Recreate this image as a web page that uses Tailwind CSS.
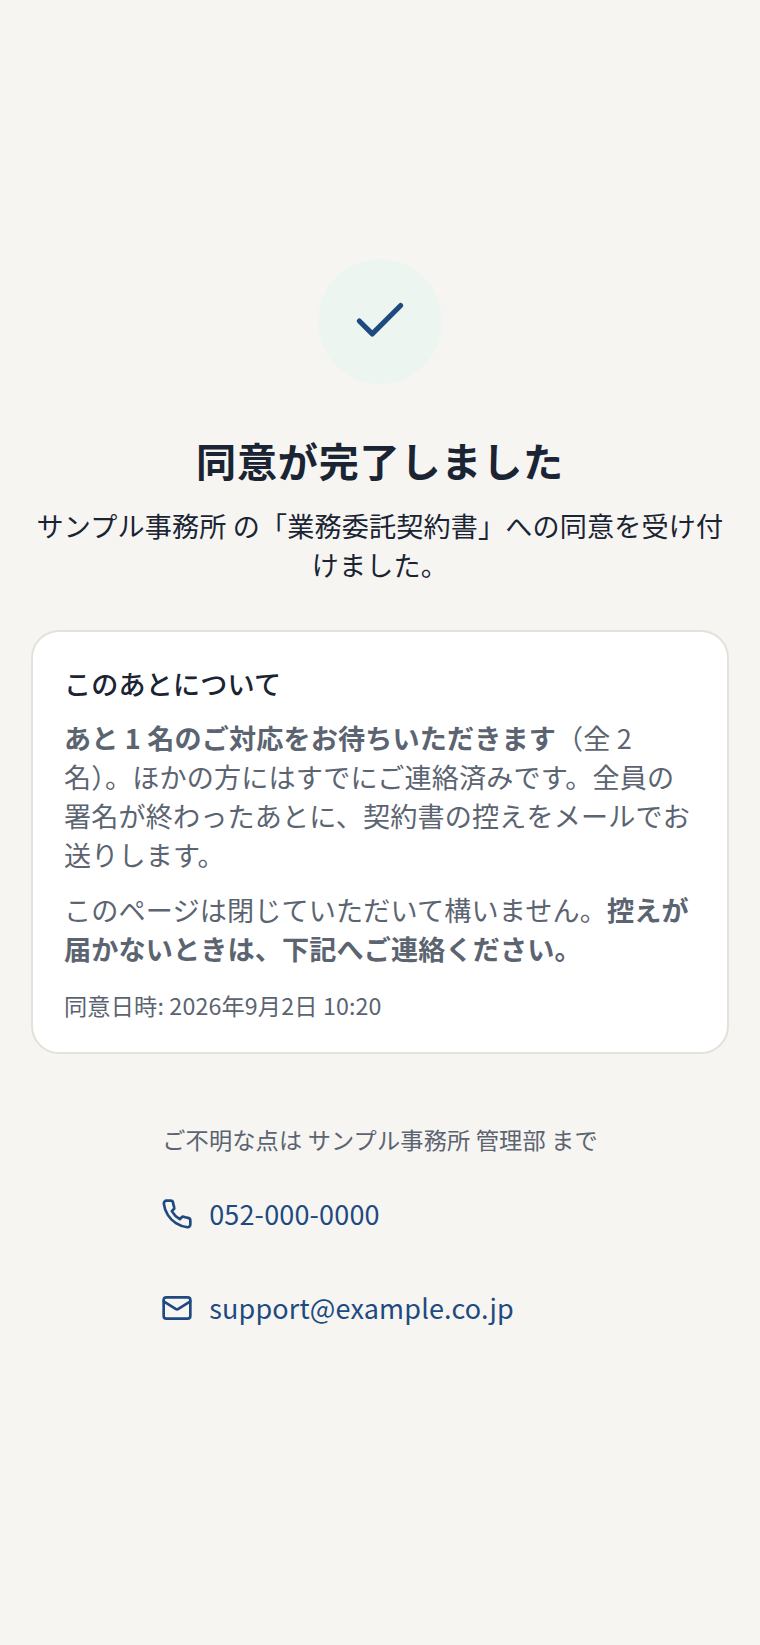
<!DOCTYPE html>
<html lang="ja"><head><meta charset="utf-8">
<script src="https://cdn.jsdelivr.net/npm/@tailwindcss/browser@4"></script>
</head>
<body class="bg-[#f6f5f2] font-['Noto_Sans_CJK_JP','Noto_Sans',sans-serif]">
<main class="h-[1645px] flex flex-col items-center pt-[259px] px-[31px] text-[#1a2433] tracking-[0.01em]">
<div class="w-[124.8px] h-[124.8px] rounded-full bg-[#edf5f1] flex items-center justify-center">
<svg class="w-[62px] h-[62px] text-[#1e4a80]" viewBox="0 0 24 24" fill="none" stroke="currentColor" stroke-width="2" stroke-linecap="round" stroke-linejoin="round"><path d="M20 6 9 17l-5-5"/></svg>
</div>
<h1 class="mt-[48.2px] text-[40.1px] leading-[56px] font-bold text-center tracking-[0.02em]">同意が完了しました</h1>
<p class="mt-[18px] text-[27.1px] leading-[39px] text-center">サンプル事務所 の「業務委託契約書」への同意を受け付けました。</p>
<section class="mt-[46px] w-full bg-white border-2 border-[#e4e1da] rounded-[28px] px-[31px] pt-[32px] pb-[29px]">
<h2 class="text-[27.1px] leading-[39px] font-medium">このあとについて</h2>
<p class="mt-[15px] text-[27.1px] leading-[39.15px] text-[#5b6470]"><strong class="font-bold">あと 1 名のご対応をお待ちいただきます</strong>（全 2 名）。ほかの方にはすでにご連絡済みです。全員の署名が終わったあとに、契約書の控えをメールでお送りします。</p>
<p class="mt-[15px] text-[27.1px] leading-[39.15px] text-[#5b6470]">このページは閉じていただいて構いません。<strong class="font-bold">控えが届かないときは、下記へご連絡ください。</strong></p>
<p class="mt-[19px] text-[23.2px] leading-[36px] text-[#5b6470]">同意日時: 2026年9月2日 10:20</p>
</section>
<div class="mt-[67px] flex flex-col">
<p class="text-[23.2px] leading-[36px] text-[#5b6470]">ご不明な点は サンプル事務所 管理部 まで</p>
<a class="mt-[24px] flex items-center gap-[16px] h-[66px] text-[27px] text-[#1e4a80]"><svg class="w-[32px] h-[32px] -ml-[1px]" viewBox="0 0 24 24" fill="none" stroke="currentColor" stroke-width="2" stroke-linecap="round" stroke-linejoin="round"><path d="M22 16.92v3a2 2 0 0 1-2.18 2 19.79 19.79 0 0 1-8.63-3.07 19.5 19.5 0 0 1-6-6 19.79 19.79 0 0 1-3.07-8.67A2 2 0 0 1 4.11 2h3a2 2 0 0 1 2 1.72c.127.96.361 1.903.7 2.81a2 2 0 0 1-.45 2.11L8.09 9.91a16 16 0 0 0 6 6l1.27-1.27a2 2 0 0 1 2.11-.45c.907.339 1.85.573 2.81.7A2 2 0 0 1 22 16.92z"/></svg>052-000-0000</a>
<a class="mt-[28px] flex items-center gap-[16px] h-[66px] text-[27px] text-[#1e4a80]"><svg class="w-[32px] h-[32px] -ml-[1px]" viewBox="0 0 24 24" fill="none" stroke="currentColor" stroke-width="2" stroke-linecap="round" stroke-linejoin="round"><rect x="2" y="4" width="20" height="16" rx="2"/><path d="m22 7-8.97 5.7a1.94 1.94 0 0 1-2.06 0L2 7"/></svg>support@example.co.jp</a>
</div>
</main>
</body></html>
